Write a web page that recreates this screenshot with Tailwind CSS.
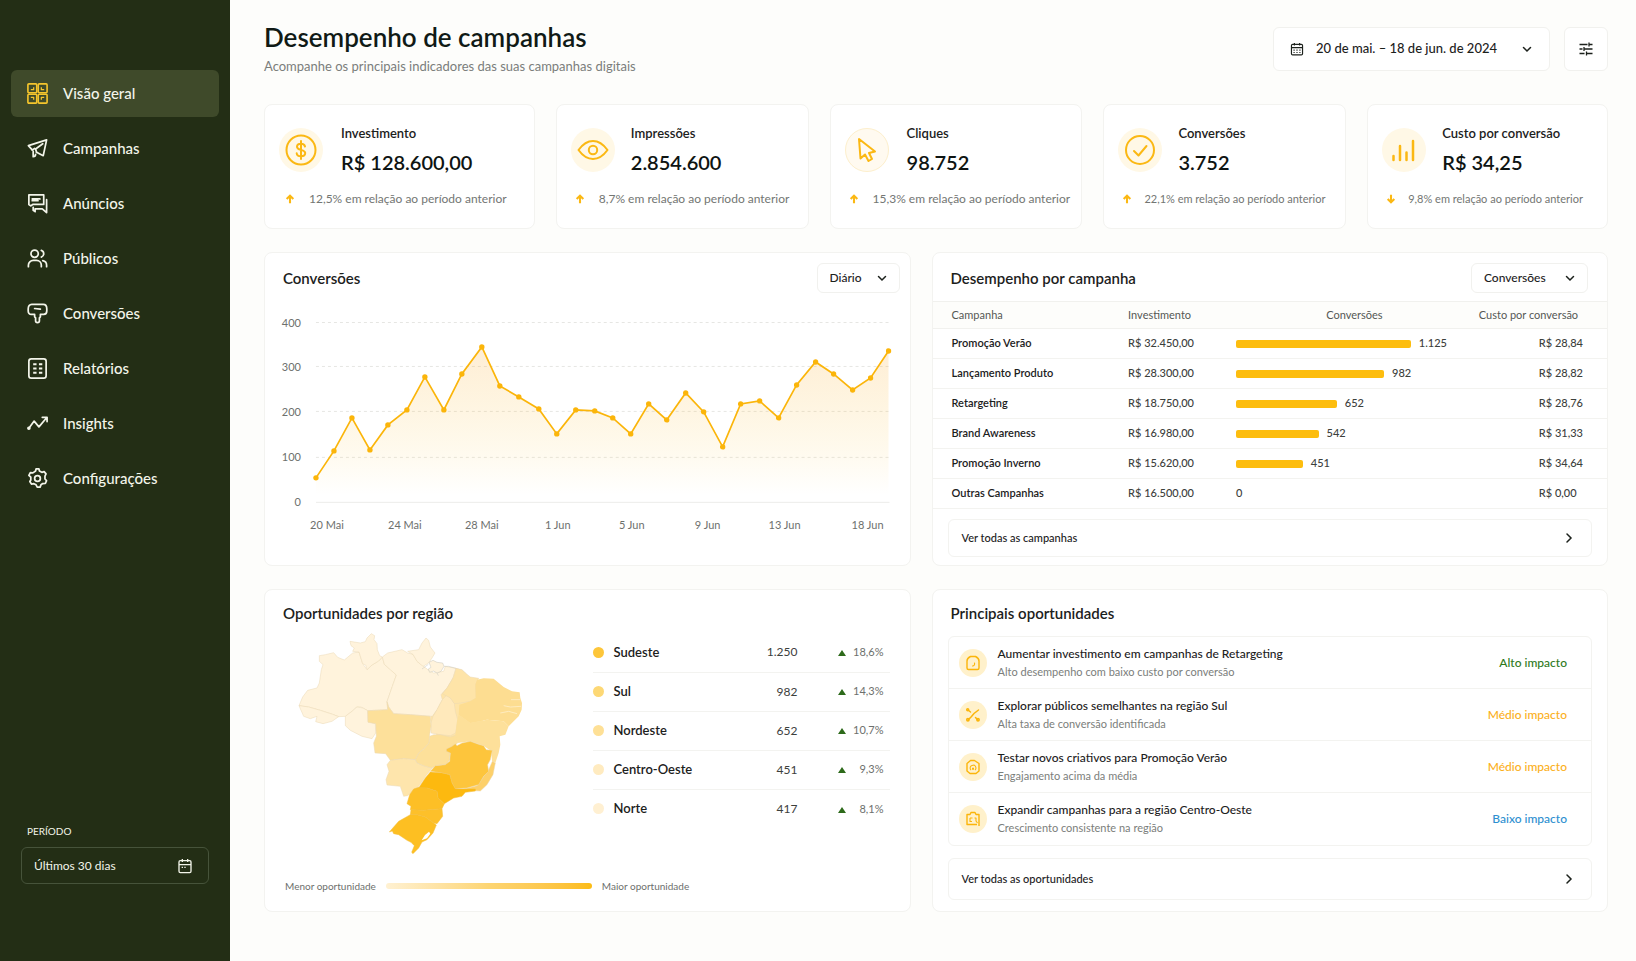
<!DOCTYPE html>
<html lang="pt-BR">

<head>
    <meta charset="UTF-8">
    <meta name="viewport" content="width=device-width, initial-scale=1.0">
    <title>Desempenho de campanhas</title>
    <script src="https://cdn.jsdelivr.net/npm/@tailwindcss/browser@4"></script>
    <style>
        body {
            font-family: 'Lato', 'Noto Sans', sans-serif;
        }
    </style>
</head>

<body class="flex min-h-screen bg-[#fdfdfb] text-[#1c211c]">

    <!-- Sidebar -->
    <aside class="flex w-[230px] shrink-0 flex-col bg-[#232e15] px-[11px] pt-[70px] pb-[77px] text-[#f3f5ea]">
        <nav class="flex flex-col gap-2 text-[15px] font-medium">
            <a href="#" class="flex h-[47px] items-center gap-[14px] rounded-md bg-[#3f4a2a] px-[15px]">
                <svg class="size-[23px] text-[#f5c52c]" viewBox="0 0 24 24" fill="none" stroke="currentColor" stroke-width="1.7" stroke-linejoin="round">
                    <rect x="2" y="2" width="9.200" height="9.200" rx="1" /><rect x="12.800" y="2" width="9.200" height="9.200" rx="1" />
                    <rect x="2" y="12.800" width="9.200" height="9.200" rx="1" /><rect x="12.800" y="12.800" width="9.200" height="9.200" rx="1" />
                    <path d="M5 8h3V5.500M16 5.500V8h3M5 16h3v2.500M16 18.500V16h3" stroke-width="1.300" />
                </svg>
                Visão geral
            </a>
            <a href="#" class="flex h-[47px] items-center gap-[14px] rounded-md px-[15px]">
                <svg class="size-[23px]" viewBox="0 0 24 24" fill="none" stroke="currentColor" stroke-width="1.8" stroke-linejoin="round" stroke-linecap="round">
                    <path d="M6.500 13.500 2.500 9 21.500 3 18 19.500l-7-3.500" /><path d="M17.500 7 10 12.500l1 3.500M6.500 13.500 9 12M7.500 15v5.500c1.500 0 2.500-.8 2.500-2.500" />
                </svg>
                Campanhas
            </a>
            <a href="#" class="flex h-[47px] items-center gap-[14px] rounded-md px-[15px]">
                <svg class="size-[23px]" viewBox="0 0 24 24" fill="none" stroke="currentColor" stroke-width="1.8" stroke-linejoin="round" stroke-linecap="round">
                    <path d="M3 3h15.500v10H7L5 14.500 3 13z" /><path d="M6.500 7.200h8M6.500 9h6M21.500 8v13.500L17 17.500H9.500v3L7.500 19v-3" />
                </svg>
                Anúncios
            </a>
            <a href="#" class="flex h-[47px] items-center gap-[14px] rounded-md px-[15px]">
                <svg class="size-[23px]" viewBox="0 0 24 24" fill="none" stroke="currentColor" stroke-width="1.8" stroke-linecap="round">
                    <circle cx="9" cy="7" r="3.800" /><path d="M2.500 20.500v-1.500a5 5 0 0 1 5-5h3.500a5 5 0 0 1 5 5v1.500M16 3.500a3.700 3.700 0 0 1 0 7M17.500 14.200c2.500.5 4 2.300 4 4.800v1.500" />
                </svg>
                Públicos
            </a>
            <a href="#" class="flex h-[47px] items-center gap-[14px] rounded-md px-[15px]">
                <svg class="size-[23px]" viewBox="0 0 24 24" fill="none" stroke="currentColor" stroke-width="1.8" stroke-linejoin="round" stroke-linecap="round">
                    <path d="M6 2.500h12c2.300 0 3.700 1.800 3.700 4.800v2.200c0 2-1.200 3.500-3.200 3.500H15v2.500l-1 1v3c0 1.300-.7 2-2 2s-2-.7-2-2v-3l-1-1V13H5.500c-2 0-3.200-1.500-3.200-3.500V7.300c0-3 1.400-4.800 3.700-4.800z" /><path d="m9 6.800 6 .7" />
                </svg>
                Conversões
            </a>
            <a href="#" class="flex h-[47px] items-center gap-[14px] rounded-md px-[15px]">
                <svg class="size-[23px]" viewBox="0 0 24 24" fill="none" stroke="currentColor" stroke-width="1.8">
                    <rect x="3" y="2" width="18" height="20" rx="2.500" /><path d="M7.500 7.500H11M13.500 7.500H17M7.500 12H11M13.500 12H17M7.500 16.500H11M13.500 16.500H17" stroke-width="2" />
                </svg>
                Relatórios
            </a>
            <a href="#" class="flex h-[47px] items-center gap-[14px] rounded-md px-[15px]">
                <svg class="size-[23px]" viewBox="0 0 24 24" fill="none" stroke="currentColor" stroke-width="1.8" stroke-linejoin="round" stroke-linecap="round">
                    <path d="M3 17 8.500 9.500l5 6L21.500 6M17 5.500h5v4.500" /><circle cx="3" cy="17" r="1" fill="currentColor" />
                </svg>
                Insights
            </a>
            <a href="#" class="flex h-[47px] items-center gap-[14px] rounded-md px-[15px]">
                <svg class="size-[23px]" viewBox="0 0 24 24" fill="none" stroke="currentColor" stroke-width="1.8" stroke-linejoin="round">
                    <path d="M10 4.200 10.500 2h3l.5 2.200 2.500 1.400 2.400-.8 2 2.400-1.100 2.300v2.900l1.700 1.900-1.300 2.800-2.700.2-1.900 1.300-.9 2.400h-3l-1.200-2.400-2.200-1.200-2.600.4-1.700-2.700L5 13.500v-2.900L3 8.700l1.500-2.800 2.700.2z" /><circle cx="12" cy="12" r="3" />
                </svg>
                Configurações
            </a>
        </nav>

        <div class="mt-auto px-[10px]">
            <p id="periodLabel" class="mb-2 pl-[6px] text-[10px] leading-4">PERÍODO</p>
            <button aria-describedby="periodLabel" class="flex h-[37px] w-full items-center justify-between rounded-md border border-[#46533a] pr-[15px] pl-3 text-xs">
                Últimos 30 dias
                <svg class="size-4" viewBox="0 0 24 24" fill="none" stroke="currentColor" stroke-width="2">
                    <rect x="3" y="4" width="18" height="18" rx="2" /><path d="M3 10h18M8 1.500V6M16 1.500V6" /><path d="M7 14h2M11 14h2" />
                </svg>
            </button>
        </div>
    </aside>

    <main class="min-w-0 flex-1 pt-5 pr-7 pb-12 pl-[34px]">

        <header class="flex items-center justify-between">
            <div>
                <h1 class="text-[26px] leading-[34px] font-semibold text-[#101a16]">Desempenho de campanhas</h1>
                <p class="text-[13px] leading-6 text-[#7b7e7b]">Acompanhe os principais indicadores das suas campanhas digitais</p>
            </div>
            <div class="flex gap-[14px]">
                <button class="flex h-11 items-center rounded-md border border-[#f1f1ee] bg-white px-4 text-[13px] font-medium">
                    <svg class="mr-3 size-[14px]" viewBox="0 0 24 24" fill="none" stroke="currentColor" stroke-width="2">
                        <rect x="2.500" y="4" width="19" height="18" rx="2" /><path d="M2.500 9.500h19M7.500 1.500V6M16.500 1.500V6" /><path d="M6 14h2M11 14h2M16 14h2M6 18h2M11 18h2M16 18h2" />
                    </svg>
                    20 de mai. – 18 de jun. de 2024
                    <svg class="ml-6 size-3" viewBox="0 0 12 12" fill="none" stroke="currentColor" stroke-width="1.500" stroke-linecap="round"><path d="m2.500 4.500 3.500 3.500 3.500-3.500" /></svg>
                </button>
                <button aria-label="Filtros" class="flex size-11 items-center justify-center rounded-md border border-[#f1f1ee] bg-white">
                    <svg class="size-[14px]" viewBox="0 0 14 14" fill="none" stroke="currentColor" stroke-width="1.300"><path d="M.5 2.500h8M10.500 2.500h3M10 .5v4M.5 7h3M5.500 7h8M5 5v4M.5 11.500h5M8 11.500h5.500M7.500 9.500v4" /></svg>
                </button>
            </div>
        </header>

        <!-- KPI cards -->
        <section class="mt-[26px] grid grid-cols-[minmax(0,271fr)_minmax(0,253fr)_minmax(0,253fr)_minmax(0,243fr)_minmax(0,241fr)] gap-[21px] whitespace-nowrap">
            <article class="rounded-lg border border-[#f3f3f0] bg-white pt-[18px] pb-5 pl-[14px]">
                <div class="flex items-center gap-[18px]">
                    <span class="flex size-11 shrink-0 items-center justify-center rounded-full bg-[#fff8e6] text-[#fbb813]">
                        <svg class="size-8" viewBox="0 0 32 32" fill="none" stroke="currentColor" stroke-width="2" stroke-linecap="round"><circle cx="16" cy="16" r="14.500" /><path d="M20 12.500c-.3-1.800-1.800-2.800-4-2.800s-4 1-4 3c0 4.300 8.200 2 8.200 6.400 0 2-1.700 3.200-4.200 3.200s-4.200-1.200-4.300-3.100M16 7v18" /></svg>
                    </span>
                    <div>
                        <h2 class="text-[13px] leading-5 font-semibold">Investimento</h2>
                        <p class="mt-1 text-xl leading-[30px] font-semibold text-[#0e1412]">R$ 128.600,00</p>
                    </div>
                </div>
                <p class="mt-[13px] flex items-center gap-[14px] pl-[6px] text-xs leading-[18px] text-[#737673]">
                    <svg class="size-[10px] text-[#fbb813]" viewBox="0 0 12 12" fill="none" stroke="currentColor" stroke-width="2.500"><path d="M6 11V2M2 6l4-4 4 4" /></svg>
                    12,5% em relação ao período anterior
                </p>
            </article>
            <article class="rounded-lg border border-[#f3f3f0] bg-white pt-[18px] pb-5 pl-[14px]">
                <div class="flex items-center gap-4">
                    <span class="flex size-11 shrink-0 items-center justify-center rounded-full bg-[#fff8e6] text-[#fbb813]">
                        <svg class="size-8" viewBox="0 0 32 32" fill="none" stroke="currentColor" stroke-width="2" stroke-linejoin="round"><path d="M1.500 16c4-5.500 8.900-9 14.500-9s10.500 3.500 14.500 9c-4 5.500-8.900 9-14.500 9S5.500 21.500 1.500 16z" /><circle cx="16" cy="16" r="4.200" /></svg>
                    </span>
                    <div>
                        <h2 class="text-[13px] leading-5 font-semibold">Impressões</h2>
                        <p class="mt-1 text-xl leading-[30px] font-semibold text-[#0e1412]">2.854.600</p>
                    </div>
                </div>
                <p class="mt-[13px] flex items-center gap-[14px] pl-1 text-xs leading-[18px] text-[#737673]">
                    <svg class="size-[10px] text-[#fbb813]" viewBox="0 0 12 12" fill="none" stroke="currentColor" stroke-width="2.500"><path d="M6 11V2M2 6l4-4 4 4" /></svg>
                    8,7% em relação ao período anterior
                </p>
            </article>
            <article class="rounded-lg border border-[#f3f3f0] bg-white pt-[18px] pb-5 pl-[14px]">
                <div class="flex items-center gap-[18px]">
                    <span class="flex size-11 shrink-0 items-center justify-center rounded-full border border-[#fdefcc] bg-[#fffaf0] text-[#fbb813]">
                        <svg class="size-8" viewBox="0 0 32 32" fill="none" stroke="currentColor" stroke-width="2" stroke-linejoin="round"><path d="M8 5l1.500 19.500 4.500-4 3.500 6.500 3.500-2-3-6 6-1.500z" /></svg>
                    </span>
                    <div>
                        <h2 class="text-[13px] leading-5 font-semibold">Cliques</h2>
                        <p class="mt-1 text-xl leading-[30px] font-semibold text-[#0e1412]">98.752</p>
                    </div>
                </div>
                <p class="mt-[13px] flex items-center gap-[14px] pl-1 text-xs leading-[18px] text-[#737673]">
                    <svg class="size-[10px] text-[#fbb813]" viewBox="0 0 12 12" fill="none" stroke="currentColor" stroke-width="2.500"><path d="M6 11V2M2 6l4-4 4 4" /></svg>
                    15,3% em relação ao período anterior
                </p>
            </article>
            <article class="rounded-lg border border-[#f3f3f0] bg-white pt-[18px] pb-5 pl-[14px]">
                <div class="flex items-center gap-4">
                    <span class="flex size-11 shrink-0 items-center justify-center rounded-full bg-[#fff8e6] text-[#fbb813]">
                        <svg class="size-8" viewBox="0 0 32 32" fill="none" stroke="currentColor" stroke-width="2" stroke-linecap="round" stroke-linejoin="round"><circle cx="16" cy="16" r="14" /><path d="m10 17 4.500 4.500 8-9.500" /></svg>
                    </span>
                    <div>
                        <h2 class="text-[13px] leading-5 font-semibold">Conversões</h2>
                        <p class="mt-1 text-xl leading-[30px] font-semibold text-[#0e1412]">3.752</p>
                    </div>
                </div>
                <p class="mt-[13px] flex items-center gap-3 pl-1 text-[11px] leading-[18px] text-[#737673]">
                    <svg class="size-[10px] text-[#fbb813]" viewBox="0 0 12 12" fill="none" stroke="currentColor" stroke-width="2.500"><path d="M6 11V2M2 6l4-4 4 4" /></svg>
                    22,1% em relação ao período anterior
                </p>
            </article>
            <article class="rounded-lg border border-[#f3f3f0] bg-white pt-[18px] pb-5 pl-[14px]">
                <div class="flex items-center gap-4">
                    <span class="flex size-11 shrink-0 items-center justify-center rounded-full bg-[#fff8e6] text-[#fbb813]">
                        <svg class="size-8" viewBox="0 0 32 32" fill="none" stroke="currentColor" stroke-width="2.500" stroke-linecap="round"><path d="M5.500 22v4M12 12v14M18.500 18.500V26M25 7v19" /></svg>
                    </span>
                    <div>
                        <h2 class="text-[13px] leading-5 font-semibold">Custo por conversão</h2>
                        <p class="mt-1 text-xl leading-[30px] font-semibold text-[#0e1412]">R$ 34,25</p>
                    </div>
                </div>
                <p class="mt-[13px] flex items-center gap-3 pl-1 text-[11px] leading-[18px] text-[#737673]">
                    <svg class="size-[10px] text-[#fbb813]" viewBox="0 0 12 12" fill="none" stroke="currentColor" stroke-width="2.500"><path d="M6 1v9M2 6l4 4 4-4" /></svg>
                    9,8% em relação ao período anterior
                </p>
            </article>
        </section>

        <div class="mt-[23px] grid grid-cols-[minmax(0,647fr)_minmax(0,677fr)] gap-x-[21px] gap-y-[23px]">

            <!-- Daily conversions -->
            <section class="rounded-lg border border-[#f3f3f0] bg-white pt-[10px] pb-6">
                <div class="flex items-center justify-between pr-[10px] pl-[18px]">
                    <h2 class="text-[15px] leading-6 font-semibold">Conversões</h2>
                    <div class="relative">
                        <select aria-label="Intervalo" class="h-[30px] w-[83px] appearance-none rounded-md border border-[#f1f1ee] bg-white pl-3 text-xs font-medium">
                            <option>Diário</option>
                            <option>Semanal</option>
                        </select>
                        <svg class="pointer-events-none absolute top-[9px] right-3 size-3" viewBox="0 0 12 12" fill="none" stroke="currentColor" stroke-width="1.500" stroke-linecap="round"><path d="m2.500 4.500 3.500 3.500 3.500-3.500" /></svg>
                    </div>
                </div>
                <svg class="mt-[7px] w-full" viewBox="1 0 645 240" role="img" aria-label="Conversões por dia">
                    <defs>
                        <linearGradient id="area" x1="0" y1="0" x2="0" y2="1">
                            <stop offset="0" stop-color="#fbb040" stop-opacity=".22" />
                            <stop offset=".72" stop-color="#fbb813" stop-opacity=".07" />
                            <stop offset="1" stop-color="#fbb813" stop-opacity="0" />
                        </linearGradient>
                        <marker id="dot" viewBox="0 0 6 6" refX="3" refY="3" markerWidth="6" markerHeight="6" markerUnits="userSpaceOnUse"><circle cx="3" cy="3" r="2.700" fill="#fbb50a" /></marker>
                    </defs>
                    <path d="M52 22.500H626M52 66.500H626M52 111.500H626M52 157.500H626" stroke="#e6e6e3" stroke-dasharray="3 3" />
                    <path d="M52 202.500H626" stroke="#ececea" />
                    <path fill="url(#area)" d="M52 178 70 151 88 118 106 150 124 125 143 110 161 77 180 110 198 74 218 47 236 86 255 97 275 109 293 134 312 110 331 111 349 118 367 134 385 104 403 120 422 93 440 112 459 147 477 104 496 101 515 118 533 85 552 62 570 74 589 90 607 78 625 51V195H52z" />
                    <polyline fill="none" stroke="#fbb50a" stroke-width="1.700" marker-start="url(#dot)" marker-mid="url(#dot)" marker-end="url(#dot)" points="52,178 70,151 88,118 106,150 124,125 143,110 161,77 180,110 198,74 218,47 236,86 255,97 275,109 293,134 312,110 331,111 349,118 367,134 385,104 403,120 422,93 440,112 459,147 477,104 496,101 515,118 533,85 552,62 570,74 589,90 607,78 625,51" />
                    <g class="fill-[#6d706d] text-[11px]" text-anchor="end">
                        <text x="37" y="27">400</text>
                        <text x="37" y="71">300</text>
                        <text x="37" y="116">200</text>
                        <text x="37" y="161">100</text>
                        <text x="37" y="206">0</text>
                    </g>
                    <g class="fill-[#6d706d] text-[11px]" text-anchor="middle">
                        <text x="63" y="229">20 Mai</text>
                        <text x="141" y="229">24 Mai</text>
                        <text x="218" y="229">28 Mai</text>
                        <text x="294" y="229">1 Jun</text>
                        <text x="368" y="229">5 Jun</text>
                        <text x="444" y="229">9 Jun</text>
                        <text x="521" y="229">13 Jun</text>
                        <text x="604" y="229">18 Jun</text>
                    </g>
                </svg>
            </section>

            <!-- Campaign table -->
            <section class="rounded-lg border border-[#f3f3f0] bg-white pt-[10px] pb-2">
                <div class="flex items-center justify-between pr-[19px] pl-[18px]">
                    <h2 class="text-[15px] leading-6 font-semibold">Desempenho por campanha</h2>
                    <div class="relative">
                        <select aria-label="Métrica" class="h-[30px] w-[117px] appearance-none rounded-md border border-[#f1f1ee] bg-white pl-3 text-xs font-medium">
                            <option>Conversões</option>
                            <option>Investimento</option>
                        </select>
                        <svg class="pointer-events-none absolute top-[9px] right-3 size-3" viewBox="0 0 12 12" fill="none" stroke="currentColor" stroke-width="1.500" stroke-linecap="round"><path d="m2.500 4.500 3.500 3.500 3.500-3.500" /></svg>
                    </div>
                </div>
                <table class="mt-2 w-full table-fixed text-left text-[11px]">
                    <colgroup>
                        <col class="w-[29%]">
                        <col class="w-[16%]">
                        <col class="w-[36%]">
                        <col class="w-[19%]">
                    </colgroup>
                    <thead>
                        <tr class="h-[27px] border-y border-[#f1f1ee] bg-[#fdfdfb] text-[#555855]">
                            <th class="pl-[19px] font-normal">Campanha</th>
                            <th class="font-normal">Investimento</th>
                            <th class="pr-[6px] text-center font-normal">Conversões</th>
                            <th class="font-normal">Custo por conversão</th>
                        </tr>
                    </thead>
                    <tbody id="campaignRows"></tbody>
                </table>
                <a href="#" class="mx-[15px] mt-[10px] flex h-[38px] items-center justify-between rounded-md border border-[#f3f3f0] pr-4 pl-[13px] text-[11px] font-medium">
                    Ver todas as campanhas
                    <svg class="size-3" viewBox="0 0 12 12" fill="none" stroke="currentColor" stroke-width="1.500" stroke-linecap="round"><path d="m4 2 4 4-4 4" /></svg>
                </a>
            </section>

            <!-- Regions -->
            <section class="rounded-lg border border-[#f3f3f0] bg-white pt-[11px] pb-4">
                <h2 class="pl-[18px] text-[15px] leading-6 font-semibold">Oportunidades por região</h2>
                <div class="mt-2 flex items-start justify-between pr-5 pl-8">
                    <svg class="h-[222px] w-[227px] shrink-0" viewBox="80 40 681 666" stroke="#ead9b4" stroke-width="1.500" stroke-linejoin="round" role="img" aria-label="Mapa do Brasil">
                        <!-- base fill behind the inland states -->
                        <path fill="#fee4a8" stroke="none" d="M500 170 620 182 640 300 600 366 500 350 480 300z" />
                        <g fill="#fff3dc">
                            <path d="M147 108 165 105 190 99 202 113 222 121 247 100 266 97 277 132 290 150 305 136 325 124 336 112 342 134 360 150 378 166 366 200 350 246 352 270 292 273 272 262 258 262 245 275 225 290 205 291 187 284 150 272 115 262 86 258 97 232 112 212 140 205 147 190 153 150 158 135 147 125z" />
                            <path d="M86 258 115 262 150 272 187 284 205 291 185 305 158 312 136 306 140 290 120 297 100 290z" />
                            <path d="M225 290 245 275 260 262 278 265 292 273 293 306 315 312 316 340 305 357 275 350 240 332 225 318z" />
                            <path d="M239 65 270 70 285 66 290 55 303 42 313 48 311 60 320 72 321 90 328 108 336 112 325 124 305 136 290 150 286 136 277 132 266 97 247 95 252 85 242 78z" />
                            <path d="M336 112 352 100 395 90 412 100 428 104 440 125 460 140 475 152 490 160 520 155 525 140 557 146 548 175 530 205 512 225 516 240 500 270 486 290 420 285 370 282 355 262 350 246 366 200 378 166 360 150 342 134z" />
                            <path d="M412 95 445 90 455 70 467 55 475 62 480 82 494 100 485 115 475 130 458 140 440 125 428 104z" />
                            <path stroke="#c9c6bd" d="M476 128 488 122 500 128 517 130 521 140 512 155 500 160 490 154 478 158 474 148 482 143zM455 148 466 140 474 134" />
                            <path fill="none" stroke="#c9c6bd" d="M500 160 504 168M521 140 535 140 557 146 575 152 588 163 592 178" />
                        </g>
                        <path fill="#ffe9bb" d="M530 225 545 240 552 252 555 275 562 300 556 340 540 348 510 345 482 340 482 310 488 290 500 270 516 240z" />
                        <path fill="#fee4a8" d="M557 146 575 150 588 162 600 172 625 176 615 195 618 235 600 245 572 250 552 252 540 235 516 222 530 205 548 175z" />
                        <path fill="#fde09a" d="M292 273 352 270 350 246 355 262 370 282 420 285 480 290 482 320 478 345 476 370 460 388 445 400 435 420 400 417 360 422 346 402 314 400 310 370 318 350 316 312 293 308z" />
                        <path fill="#fee5ac" d="M360 422 400 417 435 420 440 430 465 440 485 445 466 470 445 500 412 528 400 530 390 500 350 496 347 480 356 455 350 435z" />
                        <path fill="#fde09a" d="M478 350 490 345 510 345 540 352 560 345 562 370 545 382 530 390 540 395 538 420 528 435 500 437 485 445 465 440 440 430 435 420 445 400 460 388 476 370z" />
                        <path fill="#fddd91" stroke="none" d="M620 180 640 176 670 177 700 202 725 215 748 218 750 235 755 250 754 270 745 290 715 320 700 305 650 300 600 310 565 285 567 255 600 245 616 235 615 195z" />
                        <path fill="none" stroke="#fff3d6" stroke-width="2" d="M722 240H750M700 258 720 262 752 260M690 280 715 275 740 282" />
                        <path fill="#fde09a" stroke="none" d="M565 285 600 310 650 300 700 305 715 320 705 345 688 350 690 375 685 400 675 430 665 425 663 395 640 378 600 365 562 370 555 345 560 305z" />
                        <path fill="#fdd06a" d="M666 425 675 430 668 465 650 495 630 514 590 512 580 508 620 498 640 470 655 450z" />
                        <path fill="#fdc53c" d="M528 388 545 380 555 372 560 378 575 370 600 365 625 374 640 378 648 390 666 392 660 420 652 435 655 455 640 470 625 495 590 505 555 508 545 490 538 465 515 460 480 455 495 438 525 435 538 425 540 400 528 395z" />
                        <path fill="#fdb90f" stroke="#f3bd3c" d="M480 457 515 460 538 465 545 490 555 508 580 508 615 508 615 514 585 518 575 530 550 535 522 552 503 535 500 515 470 505 445 505 465 475z" />
                        <path fill="#fdbf26" stroke="#f3bd3c" d="M445 503 470 505 500 515 503 535 522 552 515 567 460 572 420 570 422 560 410 552 418 525 430 508z" />
                        <path fill="#fdc02a" stroke="#f3bd3c" d="M422 570 460 572 515 567 517 590 500 612 490 610 465 592 440 585 420 585z" />
                        <path fill="#fdbf22" stroke="#f3bd3c" d="M420 585 440 585 465 592 490 610 498 616 488 640 470 660 455 667 445 685 428 702 424 698 432 678 422 668 410 662 385 645 370 642 366 634 357 637 385 605z" />
                        <path fill="#fff" stroke="none" d="M454 662 464 646 476 636 480 642 470 656z" />
                    </svg>
                    <table class="w-[297px] text-[13px]">
                        <tbody id="regionRows"></tbody>
                    </table>
                </div>
                <div class="mt-[22px] flex items-center gap-[10px] pl-5 text-[10px] leading-[18px] text-[#6d706d]">
                    Menor oportunidade
                    <span class="h-[6px] w-[206px] rounded-full bg-linear-to-r from-[#fff1d2] via-[#fdd572] to-[#fcbc12]"></span>
                    Maior oportunidade
                </div>
            </section>

            <!-- Opportunities -->
            <section class="rounded-lg border border-[#f3f3f0] bg-white px-[15px] pt-[11px] pb-[11px]">
                <h2 class="pl-[3px] text-[15px] leading-6 font-semibold">Principais oportunidades</h2>
                <ul class="mt-[11px] divide-y divide-[#f3f3f0] rounded-md border border-[#f3f3f0]">
                    <li class="flex h-[52px] items-center pr-6 pl-[10px]">
                        <span class="mr-[11px] flex size-7 items-center justify-center rounded-full bg-[#fff1cb] text-[#fbb50a]">
                            <svg class="size-4" viewBox="0 0 16 16" fill="none" stroke="currentColor" stroke-width="1.400" stroke-linecap="round"><path d="M5.500 1.500h5c2 1 3.500 2.500 3.500 4.500v7c0 1-.5 1.500-1.500 1.500h-9C2.500 14.500 2 14 2 13V6c0-2 1.500-3.500 3.500-4.500z" /><path d="M9.500 8c.5 1.500-.3 3-2 3" stroke-width="1.100" /></svg>
                        </span>
                        <div class="flex-1">
                            <h3 class="text-xs leading-[18px] font-medium">Aumentar investimento em campanhas de Retargeting</h3>
                            <p class="text-[11px] leading-[18px] text-[#7b7e7b]">Alto desempenho com baixo custo por conversão</p>
                        </div>
                        <span class="text-xs font-medium text-[#2f7a1c]">Alto impacto</span>
                    </li>
                    <li class="flex h-[52px] items-center pr-6 pl-[10px]">
                        <span class="mr-[11px] flex size-7 items-center justify-center rounded-full bg-[#fff1cb] text-[#fbb50a]">
                            <svg class="size-4" viewBox="0 0 16 16" fill="none" stroke="currentColor" stroke-width="1.500" stroke-linecap="round"><path d="M3 13 6.500 9.500 9 6.500 13.500 3M3 3l2.500 2M10.500 10.500 13 13" /><circle cx="2.700" cy="2.800" r="1" /><circle cx="2.900" cy="12.800" r="1.200" /><circle cx="13" cy="12.800" r="1.200" /></svg>
                        </span>
                        <div class="flex-1">
                            <h3 class="text-xs leading-[18px] font-medium">Explorar públicos semelhantes na região Sul</h3>
                            <p class="text-[11px] leading-[18px] text-[#7b7e7b]">Alta taxa de conversão identificada</p>
                        </div>
                        <span class="text-xs font-medium text-[#fbb01c]">Médio impacto</span>
                    </li>
                    <li class="flex h-[52px] items-center pr-6 pl-[10px]">
                        <span class="mr-[11px] flex size-7 items-center justify-center rounded-full bg-[#fff1cb] text-[#fbb50a]">
                            <svg class="size-4" viewBox="0 0 16 16" fill="none" stroke="currentColor" stroke-width="1.400" stroke-linejoin="round"><path d="M5.500 1.500h4L14 4.500v7.500L11 14.500H5L2 12V4.500z" /><path d="M6 11C4.500 9.500 5 7 7 6.500l2-.5c1 .5 2 1.500 2 3 0 1-.5 1.500-1 2" stroke-width="1.100" /><path d="M7.500 9h1v1.500h-1z" stroke-width="1" /></svg>
                        </span>
                        <div class="flex-1">
                            <h3 class="text-xs leading-[18px] font-medium">Testar novos criativos para Promoção Verão</h3>
                            <p class="text-[11px] leading-[18px] text-[#7b7e7b]">Engajamento acima da média</p>
                        </div>
                        <span class="text-xs font-medium text-[#fbb01c]">Médio impacto</span>
                    </li>
                    <li class="flex h-[52px] items-center pr-6 pl-[10px]">
                        <span class="mr-[11px] flex size-7 items-center justify-center rounded-full bg-[#fff1cb] text-[#fbb50a]">
                            <svg class="size-4" viewBox="0 0 16 16" fill="none" stroke="currentColor" stroke-width="1.400" stroke-linejoin="round"><path d="M12 13.500H2V3.500h3l1-2h4l1 2h3v11.500" /><path d="M5 7h2.500M5 7v3.500h2M9.500 7H11v3l1.500 2" stroke-width="1.100" /></svg>
                        </span>
                        <div class="flex-1">
                            <h3 class="text-xs leading-[18px] font-medium">Expandir campanhas para a região Centro-Oeste</h3>
                            <p class="text-[11px] leading-[18px] text-[#7b7e7b]">Crescimento consistente na região</p>
                        </div>
                        <span class="text-xs font-medium text-[#2e8fd0]">Baixo impacto</span>
                    </li>
                </ul>
                <a href="#" class="mt-3 flex h-[42px] items-center justify-between rounded-md border border-[#f3f3f0] pr-4 pl-[13px] text-[11px] font-medium">
                    Ver todas as oportunidades
                    <svg class="size-3" viewBox="0 0 12 12" fill="none" stroke="currentColor" stroke-width="1.500" stroke-linecap="round"><path d="m4 2 4 4-4 4" /></svg>
                </a>
            </section>
        </div>
    </main>

    <script>
        // bar is a share of the Conversões column
        const campaigns = [
            { name: 'Promoção Verão', spend: 'R$ 32.450,00', conversions: '1.125', bar: 72, cost: 'R$ 28,84' },
            { name: 'Lançamento Produto', spend: 'R$ 28.300,00', conversions: '982', bar: 61, cost: 'R$ 28,82' },
            { name: 'Retargeting', spend: 'R$ 18.750,00', conversions: '652', bar: 41.5, cost: 'R$ 28,76' },
            { name: 'Brand Awareness', spend: 'R$ 16.980,00', conversions: '542', bar: 34, cost: 'R$ 31,33' },
            { name: 'Promoção Inverno', spend: 'R$ 15.620,00', conversions: '451', bar: 27.5, cost: 'R$ 34,64' },
            { name: 'Outras Campanhas', spend: 'R$ 16.500,00', conversions: '0', bar: 0, cost: 'R$ 0,00' }
        ];

        document.getElementById('campaignRows').innerHTML = campaigns.map(c => `
            <tr class="h-[30px] border-b border-[#f3f3f0] font-medium text-[#3c403c]">
                <td class="pl-[19px] font-semibold text-[#1c211c]">${c.name}</td>
                <td>${c.spend}</td>
                <td>
                    <div class="flex items-center">
                        ${c.bar ? `<span class="mr-2 h-2 rounded-xs bg-[#fdbd0e]" style="width:${c.bar}%"></span>` : ''}
                        ${c.conversions}
                    </div>
                </td>
                <td class="pl-[60px]">${c.cost}</td>
            </tr>`).join('');

        const regions = [
            { name: 'Sudeste', color: 'bg-[#fdc63a]', value: '1.250', growth: '18,6%' },
            { name: 'Sul', color: 'bg-[#fdd875]', value: '982', growth: '14,3%' },
            { name: 'Nordeste', color: 'bg-[#fee096]', value: '652', growth: '10,7%' },
            { name: 'Centro-Oeste', color: 'bg-[#ffebc0]', value: '451', growth: '9,3%' },
            { name: 'Norte', color: 'bg-[#fff0d2]', value: '417', growth: '8,1%' }
        ];

        document.getElementById('regionRows').innerHTML = regions.map(r => `
            <tr class="h-[39px] border-b border-[#f3f3f0] last:border-b-0">
                <td class="font-semibold"><span class="mr-[10px] inline-block size-[11px] rounded-full align-[-1px] ${r.color}"></span>${r.name}</td>
                <td class="w-[70px] text-right text-xs text-[#3c403c]">${r.value}</td>
                <td class="w-[48px] text-right"><svg class="inline size-2" viewBox="0 0 8 8" fill="#2d6a1a" aria-hidden="true"><path d="M4 1 8 7H0z" /></svg></td>
                <td class="w-[44px] pr-[6px] text-right text-[11px] text-[#6d706d]">${r.growth}</td>
            </tr>`).join('');
    </script>
</body>

</html>
